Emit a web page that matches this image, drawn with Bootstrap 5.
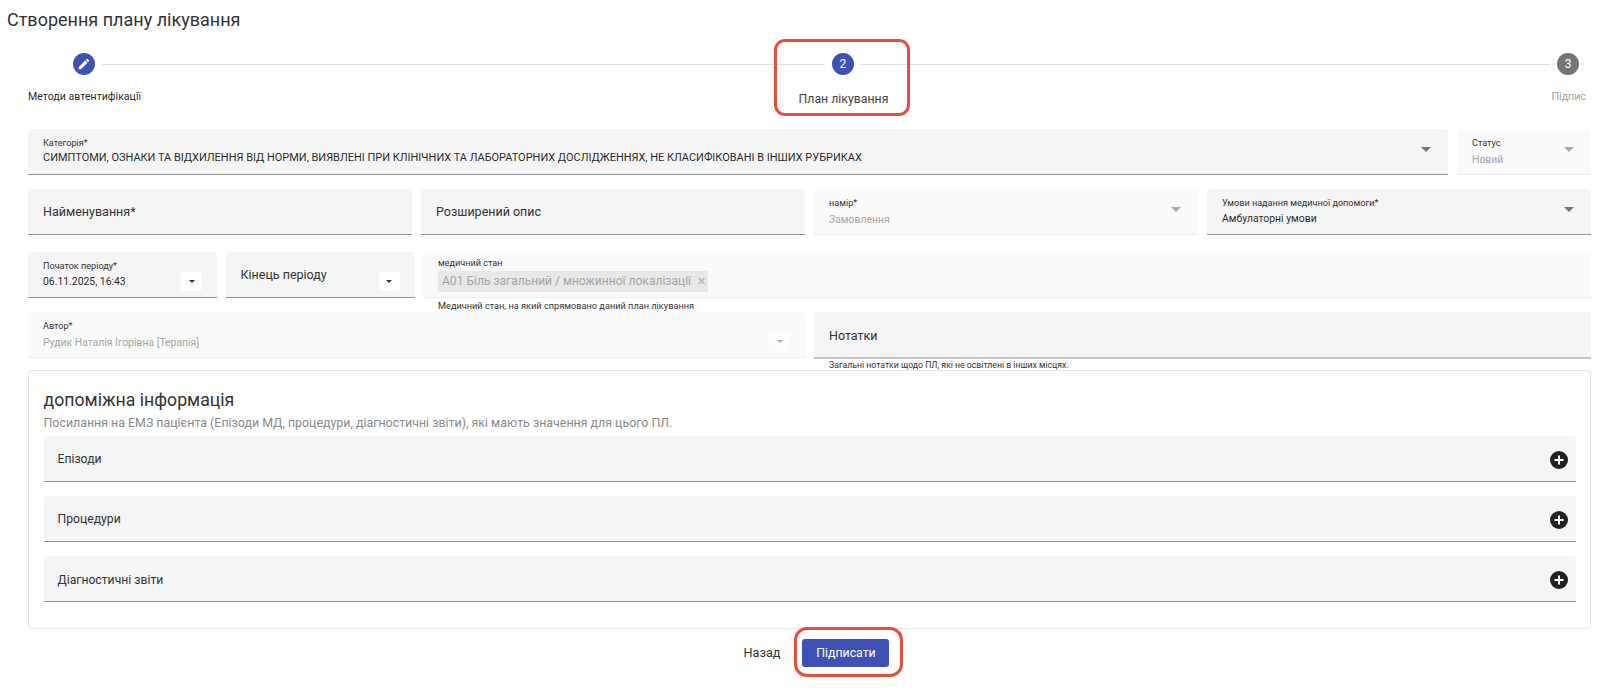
<!DOCTYPE html>
<html lang="uk">
<head>
<meta charset="utf-8">
<title>Створення плану лікування</title>
<link rel="stylesheet" href="https://cdn.jsdelivr.net/npm/bootstrap@5.3.0/dist/css/bootstrap.min.css">
<style>
html,body{height:693px;overflow:hidden}
body{font-family:Roboto,"Liberation Sans",sans-serif;color:rgba(0,0,0,.87);background:#fff}
.page-title{font-size:18px;font-weight:400;line-height:20px;margin:0;padding:10px 0 23px 7px;color:#333}
.page-body{padding:0 28px;position:relative}
.step-rail{padding-left:45px;padding-right:12px}
.step-dot{width:22px;height:22px;border-radius:50%;background:#3f51b5;color:#fff;font-size:12px;flex:none}
.step-dot.later{background:#757575}
.step-line{height:1px;background:#e0e0e0;margin:0 7px}
.step-line.first{width:724px}
.step-line.second{width:690px}
.step-labels{display:grid;grid-template-columns:770.5px 753px auto;height:54px;padding-top:15px}
.step-label{font-size:10.6px;line-height:13px;margin-top:0;color:rgba(0,0,0,.87)}
.step-label.now{font-size:12.3px;line-height:16px;margin-top:1px;color:#444}
.step-label.later{color:#9e9e9e}
.outline-mark{position:absolute;border:3px solid #e74c3c;border-radius:11px;pointer-events:none}
.outline-step{left:773.5px;top:-14px;width:136px;height:77px}
.outline-btn{left:-8px;top:-12px;width:109px;height:50px;border-radius:13px}
.fld{position:relative;background:#f5f5f5;border-bottom:1px solid #949494;border-radius:4px 4px 0 0;height:46px;padding:0 15px;display:flex;flex-direction:column;justify-content:center;min-width:0}
.fld.off{background:#fafafa;border-bottom-color:#eee}
.fld-cap{font-size:9.1px;line-height:11px;color:#333;margin-top:2px}
.fld-cap.flush{margin-top:0}
.fld-val{font-size:10.4px;line-height:16px;color:rgba(0,0,0,.87);white-space:nowrap;margin-top:2px}
.fld-val.caps{font-size:10.96px;margin-top:1px}
.off .fld-val{color:#a6a6a6;margin-top:3px}
.fld-big{font-size:12.5px;line-height:18px;color:#333}
.tri{position:absolute;width:0;height:0;border-left:5px solid transparent;border-right:5px solid transparent;border-top:5px solid #757575}
.tri-sel{right:17px;top:18px}
.off .tri{border-top-color:#aaa}
.tri-btn{position:absolute;right:15px;top:20px;width:21px;height:19px;background:#fff;border-radius:4px;display:flex;align-items:center;justify-content:center}
.tri-btn i{display:block;width:0;height:0;border-left:3px solid transparent;border-right:3px solid transparent;border-top:3px solid #333}
.off .tri-btn{background:#fdfdfd}
.off .tri-btn i{border-top-color:#aaa}
.grid-one{display:grid;grid-template-columns:1fr 134px;column-gap:9px;height:60px}
.grid-two{display:grid;grid-template-columns:repeat(4,1fr);column-gap:9px;height:63px}
.grid-three{display:grid;grid-template-columns:189px 189px 1fr;column-gap:8.5px;height:60px}
.grid-four{display:grid;grid-template-columns:1fr 1fr;column-gap:9px;height:58px}
.fld-hint{font-size:9.2px;line-height:11px;color:#333;padding-left:15px;margin-top:2px;white-space:nowrap}
.fld-hint.tight{margin-top:0;line-height:12px;font-size:8.7px}
.chip-box{display:inline-block;align-self:flex-start;background:#e8e8e8;color:#a6a6a6;font-size:12.05px;line-height:20px;width:270px;padding-left:4px;border-radius:2px;margin-top:2px;white-space:nowrap}
.chip-x{color:#bdbdbd;font-size:11px;margin-left:3px;font-weight:700}
.stem-fld{justify-content:flex-start;padding-top:4px}
.notes-fld{border-bottom:2px solid #c4c4c4;height:47px;padding-top:2px}
.info-card{height:259px;border:1px solid #e6e6e6;border-radius:4px;padding:17px 14.5px 0;background:#fff}
.info-title{font-size:17.7px;line-height:24px;font-weight:400;color:#333;margin:0}
.info-sub{font-size:12.4px;line-height:18px;color:#8a8a8a;margin:2px 0 0}
.acc-row{height:46px;background:#f5f5f5;border-bottom:1px solid #949494;border-radius:4px 4px 0 0;padding:2px 8px 0 14px;font-size:12.2px;color:#333;margin-bottom:14px}
.acc-row.first{margin-top:4px}
.acc-row.last{margin-bottom:0;padding-top:3px}
.page-foot{height:64px;padding-top:10px}
.back-link{font-size:12.7px;color:#333;margin-right:22px;text-decoration:none}
.sign-wrap{position:relative;display:inline-block;width:87px;height:28px}
.sign-btn{width:87px;height:28px;background:#3f51b5;border:0;color:#fff;font-size:12.3px;line-height:28px;padding:0;border-radius:3px}
.foot-group{margin-left:14px}
</style>
</head>
<body>
<h1 class="page-title">Створення плану лікування</h1>
<div class="page-body">
  <div class="step-rail d-flex align-items-center">
    <span class="step-dot d-flex align-items-center justify-content-center">
      <svg width="14" height="14" viewBox="0 0 24 24" fill="#fff" aria-hidden="true"><path d="M3 17.25V21h3.75L17.81 9.94l-3.75-3.75L3 17.25zM20.71 7.04a1 1 0 0 0 0-1.41l-2.34-2.34a1 1 0 0 0-1.41 0l-1.83 1.83 3.75 3.75 1.83-1.83z"/></svg>
    </span>
    <span class="step-line first"></span>
    <span class="step-dot d-flex align-items-center justify-content-center">2</span>
    <span class="step-line second"></span>
    <span class="step-dot later d-flex align-items-center justify-content-center">3</span>
  </div>
  <div class="step-labels">
    <div class="step-label">Методи автентифікації</div>
    <div class="step-label now">План лікування</div>
    <div class="step-label later">Підпис</div>
  </div>
  <span class="outline-mark outline-step"></span>

  <div class="grid-one">
    <div class="fld">
      <div class="fld-cap flush">Категорія*</div>
      <div class="fld-val caps">СИМПТОМИ, ОЗНАКИ ТА ВІДХИЛЕННЯ ВІД НОРМИ, ВИЯВЛЕНІ ПРИ КЛІНІЧНИХ ТА ЛАБОРАТОРНИХ ДОСЛІДЖЕННЯХ, НЕ КЛАСИФІКОВАНІ В ІНШИХ РУБРИКАХ</div>
      <span class="tri tri-sel"></span>
    </div>
    <div class="fld off">
      <div class="fld-cap">Статус</div>
      <div class="fld-val">Новий</div>
      <span class="tri tri-sel"></span>
    </div>
  </div>

  <div class="grid-two">
    <div class="fld"><div class="fld-big">Найменування*</div></div>
    <div class="fld"><div class="fld-big">Розширений опис</div></div>
    <div class="fld off">
      <div class="fld-cap">намір*</div>
      <div class="fld-val">Замовлення</div>
      <span class="tri tri-sel"></span>
    </div>
    <div class="fld">
      <div class="fld-cap">Умови надання медичної допомоги*</div>
      <div class="fld-val">Амбулаторні умови</div>
      <span class="tri tri-sel"></span>
    </div>
  </div>

  <div class="grid-three">
    <div class="fld">
      <div class="fld-cap">Початок періоду*</div>
      <div class="fld-val">06.11.2025, 16:43</div>
      <span class="tri-btn"><i></i></span>
    </div>
    <div class="fld">
      <div class="fld-big">Кінець періоду</div>
      <span class="tri-btn"><i></i></span>
    </div>
    <div>
      <div class="fld off stem-fld">
        <div class="fld-cap">медичний стан</div>
        <div class="chip-box">А01 Біль загальний / множинної локалізації <span class="chip-x">✕</span></div>
      </div>
      <div class="fld-hint">Медичний стан, на який спрямовано даний план лікування</div>
    </div>
  </div>

  <div class="grid-four">
    <div class="fld off">
      <div class="fld-cap">Автор*</div>
      <div class="fld-val">Рудик Наталія Ігорівна [Терапія]</div>
      <span class="tri-btn"><i></i></span>
    </div>
    <div>
      <div class="fld notes-fld"><div class="fld-big">Нотатки</div></div>
      <div class="fld-hint tight">Загальні нотатки щодо ПЛ, які не освітлені в інших місцях.</div>
    </div>
  </div>

  <div class="card info-card">
    <h2 class="info-title">допоміжна інформація</h2>
    <p class="info-sub">Посилання на ЕМЗ пацієнта (Епізоди МД, процедури, діагностичні звіти), які мають значення для цього ПЛ.</p>
    <div class="acc-row first d-flex align-items-center justify-content-between">
      <span>Епізоди</span>
      <svg width="18" height="18" viewBox="0 0 18 18" aria-hidden="true"><circle cx="9" cy="9" r="9" fill="#212121"/><path d="M9 4.5v9M4.5 9h9" stroke="#fff" stroke-width="2"/></svg>
    </div>
    <div class="acc-row d-flex align-items-center justify-content-between">
      <span>Процедури</span>
      <svg width="18" height="18" viewBox="0 0 18 18" aria-hidden="true"><circle cx="9" cy="9" r="9" fill="#212121"/><path d="M9 4.5v9M4.5 9h9" stroke="#fff" stroke-width="2"/></svg>
    </div>
    <div class="acc-row last d-flex align-items-center justify-content-between">
      <span>Діагностичні звіти</span>
      <svg width="18" height="18" viewBox="0 0 18 18" aria-hidden="true"><circle cx="9" cy="9" r="9" fill="#212121"/><path d="M9 4.5v9M4.5 9h9" stroke="#fff" stroke-width="2"/></svg>
    </div>
  </div>

  <div class="page-foot d-flex justify-content-center align-items-start">
    <div class="foot-group d-flex align-items-center">
      <a class="back-link" href="#">Назад</a>
      <span class="sign-wrap">
        <button type="button" class="btn sign-btn">Підписати</button>
        <span class="outline-mark outline-btn"></span>
      </span>
    </div>
  </div>
</div>
<script src="https://cdn.jsdelivr.net/npm/bootstrap@5.3.0/dist/js/bootstrap.bundle.min.js"></script>
</body>
</html>
